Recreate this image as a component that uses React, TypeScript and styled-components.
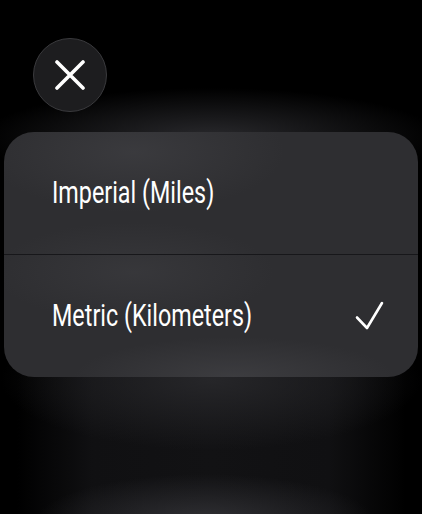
import React, { useState } from 'react';
import styled, { createGlobalStyle } from 'styled-components';

const GlobalStyle = createGlobalStyle`
  html, body {
    margin: 0;
    padding: 0;
    background: #000000;
  }

  body {
    font-family: Roboto, "Liberation Sans", sans-serif;
    -webkit-font-smoothing: antialiased;
  }
`;

const Screen = styled.div`
  width: 422px;
  height: 514px;
  overflow: hidden;

  display: flex;
  flex-direction: column;

  padding: 38px 4px 0;
  box-sizing: border-box;

  background-color: #000000;
  background-image:
    radial-gradient(ellipse 170px 48px at 205px 522px, rgba(50, 50, 54, 0.95), rgba(50, 50, 54, 0) 100%),
    radial-gradient(ellipse 210px 70px at 211px 380px, rgba(38, 38, 41, 1), rgba(38, 38, 41, 0) 100%),
    radial-gradient(ellipse 230px 50px at 211px 138px, rgba(46, 46, 50, 0.9), rgba(46, 46, 50, 0) 100%),
    linear-gradient(90deg, #000 4%, #101012 22%, #121214 50%, #101012 78%, #000 96%);
  background-repeat: no-repeat;
  background-size: 100% 100%, 100% 100%, 100% 100%, 100% 200px;
  background-position: 0 0, 0 0, 0 0, 0 314px;
`;

const CloseButton = styled.button`
  margin-left: 29px;

  width: 74px;
  height: 74px;
  flex: 0 0 auto;

  display: flex;
  align-items: center;
  justify-content: center;

  padding: 0;
  border: 1.5px solid #3a3a3d;
  border-radius: 50%;

  background: #1d1d1f;
  cursor: pointer;
`;

const Card = styled.div`
  margin-top: 20px;

  display: flex;
  flex-direction: column;

  border-radius: 30px;
  overflow: hidden;

  background:
    radial-gradient(ellipse 150px 60px at 130px 20px, rgba(70, 70, 74, 0.5), rgba(70, 70, 74, 0) 100%),
    radial-gradient(ellipse 140px 50px at 130px 140px, rgba(66, 66, 70, 0.45), rgba(66, 66, 70, 0) 100%),
    radial-gradient(ellipse 160px 40px at 230px 245px, rgba(72, 72, 76, 0.55), rgba(72, 72, 76, 0) 100%),
    #2e2e31;
`;

const Row = styled.button<{ $first?: boolean }>`
  height: ${({ $first }) => ($first ? '122px' : '123px')};

  display: flex;
  align-items: center;
  justify-content: space-between;

  padding: 0 34px 0 48px;
  border: none;
  border-top: ${({ $first }) => ($first ? 'none' : '1px solid #17171a')};

  background: transparent;
  cursor: pointer;
  text-align: left;
`;

const Label = styled.span`
  display: inline-block;

  font-family: Roboto, "Liberation Sans", sans-serif;
  font-size: 30.5px;
  line-height: 1;
  color: #ffffff;
  white-space: nowrap;

  transform: scaleX(0.765);
  transform-origin: left center;
`;

const CloseIcon = () => (
  <svg width="30" height="30" viewBox="0 0 30 30" fill="none">
    <path
      d="M2 2 L28 28 M28 2 L2 28"
      stroke="#ffffff"
      strokeWidth="3.6"
      strokeLinecap="round"
    />
  </svg>
);

const CheckIcon = () => (
  <svg width="30" height="30" viewBox="0 0 30 30" fill="none">
    <path
      d="M3 16.5 L13 27 L28 2"
      stroke="#ffffff"
      strokeWidth="2.6"
      strokeLinecap="round"
      strokeLinejoin="round"
    />
  </svg>
);

const OPTIONS = ['Imperial (Miles)', 'Metric (Kilometers)'];

const App = () => {
  const [selected, setSelected] = useState(1);

  return (
    <>
      <GlobalStyle />
      <Screen>
        <CloseButton aria-label="Close">
          <CloseIcon />
        </CloseButton>
        <Card>
          {OPTIONS.map((option, index) => (
            <Row key={option} $first={index === 0} onClick={() => setSelected(index)}>
              <Label>{option}</Label>
              {selected === index && <CheckIcon />}
            </Row>
          ))}
        </Card>
      </Screen>
    </>
  );
};

export default App;
